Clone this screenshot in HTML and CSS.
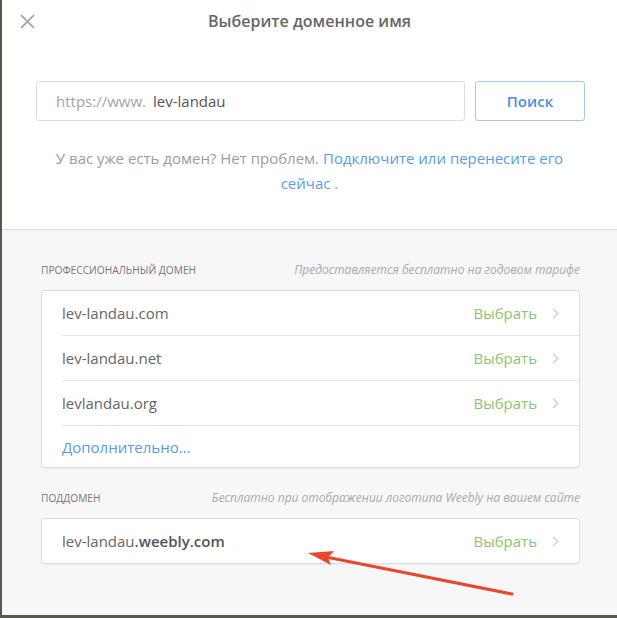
FILE: index.html
```html
<!DOCTYPE html>
<html>
<head>
<meta charset="utf-8">
<title>Выберите доменное имя</title>
<link rel="stylesheet" href="styles.css">
</head>
<body>
  <div class="modal">
    <div class="top">
      <div class="header">
        <span class="close">
          <svg width="15" height="15" viewBox="0 0 15 15"><path d="M1 1L14 14M14 1L1 14" stroke="#9a9a9a" stroke-width="1.6" fill="none"/></svg>
        </span>
        <h1 class="title">Выберите доменное имя</h1>
        <span></span>
      </div>
      <div class="search">
        <div class="field"><span class="prefix">https://www.</span><span class="value">lev-landau</span></div>
        <div class="btn">Поиск</div>
      </div>
      <p class="hint">У вас уже есть домен? Нет проблем. <a href="#">Подключите или перенесите его</a><br><a href="#">сейчас</a> .</p>
    </div>

    <div class="section">
      <div class="section-head">
        <span class="label">Профессиональный домен</span>
        <span class="note">Предоставляется бесплатно на годовом тарифе</span>
      </div>
      <ul class="card">
        <li><span class="name">lev-landau.com</span><span class="pick">Выбрать <i class="chev"></i></span></li>
        <li><span class="name">lev-landau.net</span><span class="pick">Выбрать <i class="chev"></i></span></li>
        <li><span class="name">levlandau.org</span><span class="pick">Выбрать <i class="chev"></i></span></li>
        <li><a class="more" href="#">Дополнительно...</a></li>
      </ul>

      <div class="section-head sub">
        <span class="label">Поддомен</span>
        <span class="note">Бесплатно при отображении логотипа Weebly на вашем сайте</span>
      </div>
      <ul class="card">
        <li><span class="name">lev-landau<b>.weebly.com</b></span><span class="pick">Выбрать <i class="chev"></i></span></li>
      </ul>
    </div>

    <svg class="arrow" width="617" height="618" viewBox="0 0 617 618">
      <line x1="512" y1="594" x2="326" y2="557" stroke="#e8472e" stroke-width="3" stroke-linecap="round"/>
      <polygon points="308,553 334,551 328,557.5 331,565" fill="#e8472e"/>
    </svg>
  </div>
</body>
</html>
```

FILE: styles.css
```css
* {
  padding: 0;
  margin: 0;
  box-sizing: border-box;
}

body {
  background: #5a584c;
  font-family: "Open Sans", "Liberation Sans", sans-serif;
}

ul {
  list-style-type: none;
}

a {
  color: #5a9be3;
  text-decoration: none;
}

.modal {
  position: relative;
  margin-left: 2px;
  height: 615px;
  background: #f7f7f7;
}

.top {
  height: 230px;
  background: #fff;
  border-bottom: 1px solid #dedede;
}

.header {
  display: grid;
  grid-template-columns: 50px 1fr 50px;
  align-items: center;
  height: 42px;
}

.close {
  display: flex;
  padding-left: 18px;
}

.title {
  text-align: center;
  font-size: 16px;
  font-weight: 600;
  color: #666;
}

.search {
  display: flex;
  gap: 10px;
  height: 40px;
  margin: 39px 32px 0 34px;
}

.field {
  flex: 1;
  display: flex;
  align-items: center;
  padding-left: 19px;
  border: 1px solid #dcdcdc;
  border-radius: 3px;
  font-size: 15px;
}

.prefix {
  color: #a3a3a3;
}

.value {
  margin-left: 7px;
  color: #555;
}

.btn {
  width: 110px;
  display: flex;
  align-items: center;
  justify-content: center;
  border: 1px solid #a3c8f1;
  border-radius: 3px;
  color: #4b8ee0;
  font-size: 15px;
  font-weight: 600;
}

.hint {
  margin: 25px 45px 0;
  text-align: center;
  font-size: 15px;
  line-height: 25px;
  color: #9c9c9c;
}

.section {
  padding: 0 37px 0 39px;
}

.section-head {
  display: flex;
  justify-content: space-between;
  align-items: baseline;
  margin-top: 31px;
  margin-bottom: 12px;
}

.section-head.sub {
  margin-top: 21px;
}

.label {
  font-size: 10.2px;
  text-transform: uppercase;
  color: #777;
}

.note {
  font-size: 12px;
  font-style: italic;
  color: #aaa;
}

.card {
  background: #fff;
  border: 1px solid #dcdcdc;
  border-radius: 3px;
  box-shadow: 0 1px 1px rgba(0, 0, 0, 0.04);
}

.card li {
  display: flex;
  align-items: center;
  justify-content: space-between;
  height: 44px;
  margin-left: 20px;
  padding-right: 22px;
  font-size: 15px;
  color: #666;
}

.card li + li {
  border-top: 1px solid #e4e4e4;
  height: 45px;
}

.card li:last-child {
  height: 42px;
}

.card li:only-child {
  height: 44px;
}

.name b {
  font-weight: 600;
  color: #555;
}

.pick {
  display: flex;
  align-items: center;
  color: #8cc56f;
}

.chev {
  width: 7px;
  height: 7px;
  margin-left: 13px;
  border-top: 1.5px solid #c2c2c2;
  border-right: 1.5px solid #c2c2c2;
  transform: rotate(45deg);
}

.arrow {
  position: absolute;
  left: -2px;
  top: 0;
  pointer-events: none;
}
```
